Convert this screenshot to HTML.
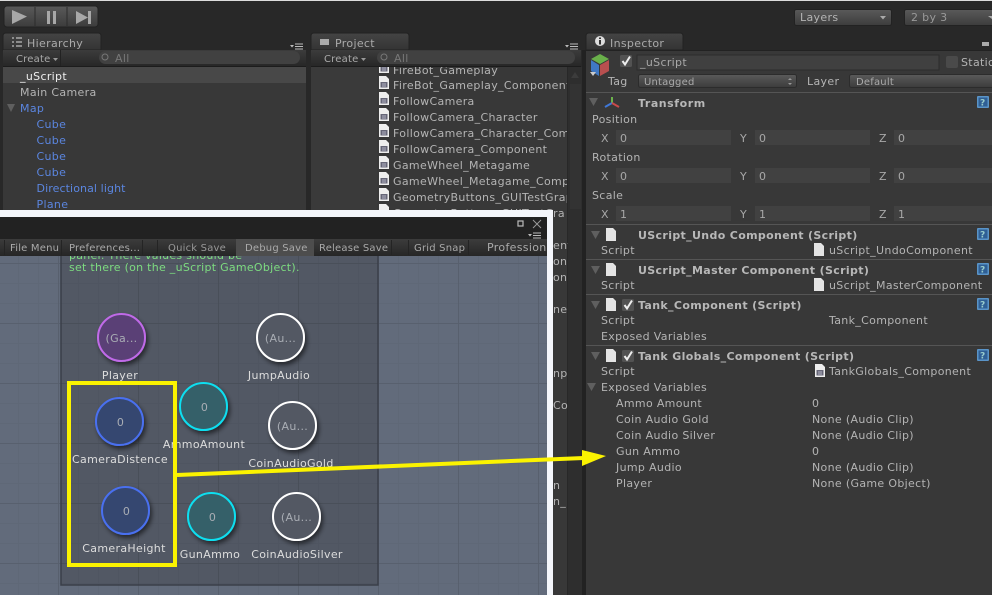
<!DOCTYPE html>
<html><head><meta charset="utf-8"><style>
html,body{margin:0;padding:0;background:#282828;width:992px;height:595px;overflow:hidden}
svg{display:block}
text{font-family:"DejaVu Sans",sans-serif;font-size:11px;letter-spacing:.33px;fill:#b4b4b4;white-space:pre}
.b{fill:#5b86e0}
.w{fill:#eee}
.s{font-size:10px;fill:#aaa;letter-spacing:.2px}
.h{font-weight:bold;fill:#b8b8b8;letter-spacing:.35px}
.d{fill:#a8a8a8}
.t{fill:#ddd;text-anchor:middle}
.n{fill:#a9adb4;text-anchor:middle}
.g{fill:#7ddc80;letter-spacing:.27px}
</style></head><body>
<svg width="992" height="595" viewBox="0 0 992 595" xmlns="http://www.w3.org/2000/svg">
<defs>
<linearGradient id="btn" x1="0" y1="0" x2="0" y2="1"><stop offset="0" stop-color="#5a5a5a"/><stop offset="1" stop-color="#3c3c3c"/></linearGradient>
<linearGradient id="tb" x1="0" y1="0" x2="0" y2="1"><stop offset="0" stop-color="#3c3c3c"/><stop offset="1" stop-color="#262626"/></linearGradient>
<linearGradient id="tab" x1="0" y1="0" x2="0" y2="1"><stop offset="0" stop-color="#444"/><stop offset="1" stop-color="#343434"/></linearGradient>
<pattern id="grid" width="80" height="60" patternUnits="userSpaceOnUse" x="58" y="263">
<path d="M0 .5H80M0 20.5H80M0 40.5H80M.5 0V60M20.5 0V60M40.5 0V60M60.5 0V60" stroke="#000" stroke-opacity=".03" fill="none"/>
<path d="M0 .5H80M.5 0V60" stroke="#000" stroke-opacity=".08" fill="none"/>
</pattern>
<filter id="sh" x="-30%" y="-30%" width="170%" height="170%"><feDropShadow dx="2" dy="3" stdDeviation="2.5" flood-color="#000" flood-opacity=".55"/></filter>
<g id="cs"><path d="M1 0H8L11 3V13H1Z" fill="#eee"/><rect x="2.500" y="6" width="7" height="5.500" fill="#667"/><path d="M4 8H8M4 10H8" stroke="#ccd" stroke-width=".7"/></g>
<g id="doc"><path d="M1 0H8L11 3V13H1Z" fill="#e4e4e4"/></g>
<g id="help"><rect width="12" height="12" rx="1" fill="#5a94c8"/><rect x="1.500" y="1.500" width="9" height="9" fill="#2f5f95"/><text x="3" y="9.500" style="font-size:9px;font-weight:bold;fill:#9cc;letter-spacing:0">?</text></g>
<g id="tri"><path d="M0 0H9L4.500 8Z" fill="#5f5f5f"/></g>
<g id="chk"><rect width="12" height="12" rx="1.500" fill="#525252"/><path d="M2.500 6L5 9.500L10 1.500" stroke="#eee" stroke-width="2" fill="none"/></g>
<g id="menu"><path d="M0 2H4L2 4.500Z" fill="#bbb"/><path d="M5 1H13M5 3.500H13M5 6H13" stroke="#bbb"/></g>
</defs>

<rect width="992" height="595" fill="#282828"/>
<rect width="992" height="1" fill="#ddd"/>
<!-- play controls -->
<rect x="4" y="6" width="94" height="21" rx="3" fill="url(#btn)" stroke="#222"/>
<path d="M35 7V26M67 7V26" stroke="#2c2c2c"/>
<path d="M12 10L27 16.500L12 24Z" fill="#a8a8a8"/>
<path d="M47 11H50V24H47ZM53 11H56V24H53Z" fill="#a8a8a8"/>
<path d="M76 11L88 17.500L76 24ZM88 11H91V24H88Z" fill="#a8a8a8"/>
<!-- layers -->
<rect x="794.500" y="9.500" width="97" height="16" rx="2" fill="url(#btn)" stroke="#222"/>
<text x="800" y="21" fill="#aaa">Layers</text><path d="M880 16H886L883 19.500Z" fill="#aaa"/>
<rect x="904.500" y="9.500" width="90" height="16" rx="2" fill="url(#btn)" stroke="#222"/>
<text x="911" y="21" style="fill:#999">2 by 3</text><path d="M988 16H992V19Z" fill="#aaa"/>

<!-- hierarchy -->
<path d="M3 50V36Q3 33 6 33H98Q101 33 101 36V50Z" fill="url(#tab)" stroke="#222"/>
<path d="M12 38H14M16 38H22M12 42H14M16 42H22M12 46H14M16 46H22" stroke="#ddd"/>
<text x="27" y="47" style="fill:#aaa">Hierarchy</text>
<use href="#menu" x="290" y="43"/>
<rect x="3" y="50" width="303" height="17" fill="url(#tb)"/>
<rect x="3" y="66" width="303" height="1" fill="#1c1c1c"/>
<path d="M60.500 50V66" stroke="#222"/>
<text x="16" y="62" class="s">Create</text><path d="M53 58H58L55.500 61Z" fill="#999"/>
<rect x="99" y="51" width="201" height="13" rx="6.500" fill="#414141"/>
<circle cx="105" cy="57" r="3" fill="none" stroke="#777"/>
<text x="115" y="62" style="fill:#777">All</text>
<rect x="3" y="67" width="303" height="143" fill="#383838"/>
<rect x="3" y="67" width="303" height="16" fill="#484848"/>
<text x="20" y="80" class="w">_uScript</text>
<text x="20" y="96">Main Camera</text>
<path d="M7 104H15L11 112Z" fill="#5f5f5f"/>
<text x="20" y="112" class="b">Map</text>
<text x="36.500" y="128" class="b">Cube</text>
<text x="36.500" y="144" class="b">Cube</text>
<text x="36.500" y="160" class="b">Cube</text>
<text x="36.500" y="176" class="b">Cube</text>
<text x="36.500" y="192" class="b" style="letter-spacing:.1px">Directional light</text>
<text x="36.500" y="208" class="b">Plane</text>

<!-- project -->
<path d="M311 50V36Q311 33 314 33H406Q409 33 409 36V50Z" fill="url(#tab)" stroke="#222"/>
<path d="M320 39H329V45H320Z" fill="#aaa"/>
<text x="335" y="47" style="fill:#aaa">Project</text>
<use href="#menu" x="565" y="43"/>
<rect x="311" y="50" width="270" height="17" fill="url(#tb)"/>
<rect x="311" y="66" width="270" height="1" fill="#1c1c1c"/>
<text x="324" y="62" class="s">Create</text><path d="M361 58H366L363.500 61Z" fill="#999"/>
<rect x="377" y="51" width="198" height="13" rx="6.500" fill="#414141"/>
<circle cx="384" cy="57" r="3" fill="none" stroke="#777"/>
<text x="394" y="62" style="fill:#777">All</text>
<rect x="311" y="67" width="66" height="528" fill="#3a3a3a"/>
<rect x="377" y="67" width="190" height="528" fill="#383838"/>
<rect x="568" y="67" width="14" height="528" fill="#2e2e2e"/>
<path d="M571 78L575 72L579 78Z" fill="#3c3c3c"/>
<rect x="570" y="84" width="11" height="125" fill="#333"/>
<svg x="377" y="67" width="190" height="143" viewBox="377 67 190 143">
<text x="393" y="74">FireBot_Gameplay</text>
<text x="393" y="89">FireBot_Gameplay_Component</text>
<text x="393" y="105">FollowCamera</text>
<text x="393" y="121">FollowCamera_Character</text>
<text x="393" y="137">FollowCamera_Character_Component</text>
<text x="393" y="153">FollowCamera_Component</text>
<text x="393" y="169">GameWheel_Metagame</text>
<text x="393" y="185">GameWheel_Metagame_Component</text>
<text x="393" y="201">GeometryButtons_GUITestGraph</text>
<text x="393" y="217">GeometryButtons_GUITestGraph</text>
<use href="#cs" x="378" y="60"/><use href="#cs" x="378" y="76"/><use href="#cs" x="378" y="92"/><use href="#cs" x="378" y="108"/><use href="#cs" x="378" y="124"/><use href="#cs" x="378" y="140"/><use href="#cs" x="378" y="156"/><use href="#cs" x="378" y="172"/><use href="#cs" x="378" y="188"/><use href="#cs" x="378" y="204"/>
</svg>
<svg x="553" y="205" width="15" height="390" viewBox="553 205 15 390">
<text x="553" y="217">ra</text>
<text x="553" y="249">ent</text>
<text x="553" y="265">on(</text>
<text x="553" y="281">on(</text>
<text x="553" y="313">ne</text>
<text x="553" y="377">npo</text>
<text x="553" y="409">Co</text>
<text x="553" y="489">n</text>
<text x="553" y="505">n_</text>
</svg>

<!-- inspector -->
<rect x="586" y="50" width="406" height="545" fill="#383838"/>
<rect x="582" y="50" width="4" height="545" fill="#222"/>
<path d="M586 50V36Q586 33 589 33H680Q683 33 683 36V50Z" fill="url(#tab)" stroke="#222"/>
<circle cx="600" cy="41" r="5" fill="#ddd"/><rect x="599" y="40" width="2" height="4.500" fill="#333"/><rect x="599" y="37.500" width="2" height="1.500" fill="#333"/>
<text x="610" y="47" style="fill:#aaa">Inspector</text>
<path d="M982 42H989V46H982Z" fill="#aaa"/>
<rect x="586" y="50" width="406" height="1" fill="#222"/>
<path d="M591 59L600 54L609 59L600 64Z" fill="#69b04a"/><path d="M591 60L599 65V76L591 71Z" fill="#3f78c4"/><path d="M600 65L609 60V71L600 76Z" fill="#b84f4f"/>
<path d="M590 72H596L593 76Z" fill="#ccc"/>
<use href="#chk" x="620" y="55"/>
<rect x="637" y="55" width="302" height="15" fill="#404040" stroke="#2c2c2c"/>
<text x="640" y="66" class="d">_uScript</text>
<rect x="946" y="56" width="12" height="12" rx="2" fill="#4a4a4a"/>
<text x="961" y="66">Static</text>
<text x="608" y="85">Tag</text>
<rect x="638.500" y="74.500" width="158" height="13" rx="2" fill="url(#btn)" stroke="#2c2c2c"/>
<text x="644" y="85" class="s">Untagged</text><path d="M788 80L790 78L792 80ZM788 83H792L790 85Z" fill="#999"/>
<text x="807" y="85">Layer</text>
<rect x="849.500" y="74.500" width="150" height="13" rx="2" fill="url(#btn)" stroke="#2c2c2c"/>
<text x="856" y="85" class="s">Default</text>
<rect x="586" y="92" width="406" height="1" fill="#555"/>
<use href="#tri" x="589" y="98"/>
<path d="M612 103V97" stroke="#6cb24c" stroke-width="2"/><path d="M612 103L605 107" stroke="#3f78d8" stroke-width="2"/><path d="M612 103L619 107" stroke="#c94a4a" stroke-width="2"/>
<text x="638" y="107" class="h" style="letter-spacing:.55px">Transform</text>
<use href="#help" x="977" y="96"/>
<text x="592" y="123">Position</text>
<text x="592" y="161">Rotation</text>
<text x="592" y="199">Scale</text>
<g id="rows">
<text x="601" y="142" class="d">X</text><rect x="616" y="130" width="115" height="15" fill="#414141"/><text x="620" y="142" class="d">0</text>
<text x="740" y="142" class="d">Y</text><rect x="755" y="130" width="115" height="15" fill="#414141"/><text x="759" y="142" class="d">0</text>
<text x="879" y="142" class="d">Z</text><rect x="894" y="130" width="98" height="15" fill="#414141"/><text x="898" y="142" class="d">0</text>
<text x="601" y="180" class="d">X</text><rect x="616" y="168" width="115" height="15" fill="#414141"/><text x="620" y="180" class="d">0</text>
<text x="740" y="180" class="d">Y</text><rect x="755" y="168" width="115" height="15" fill="#414141"/><text x="759" y="180" class="d">0</text>
<text x="879" y="180" class="d">Z</text><rect x="894" y="168" width="98" height="15" fill="#414141"/><text x="898" y="180" class="d">0</text>
<text x="601" y="218" class="d">X</text><rect x="616" y="206" width="115" height="15" fill="#414141"/><text x="620" y="218" class="d">1</text>
<text x="740" y="218" class="d">Y</text><rect x="755" y="206" width="115" height="15" fill="#414141"/><text x="759" y="218" class="d">1</text>
<text x="879" y="218" class="d">Z</text><rect x="894" y="206" width="98" height="15" fill="#414141"/><text x="898" y="218" class="d">1</text>
</g>
<rect x="586" y="224" width="406" height="1" fill="#555"/>
<use href="#tri" x="591" y="231"/><use href="#doc" x="605" y="228"/>
<text x="638" y="239" class="h">UScript_Undo Component (Script)</text><use href="#help" x="977" y="228"/>
<text x="601" y="254">Script</text><use href="#doc" x="813" y="243"/><text x="829" y="254">uScript_UndoComponent</text>
<rect x="586" y="259" width="406" height="1" fill="#555"/>
<use href="#tri" x="591" y="266"/><use href="#doc" x="605" y="263"/>
<text x="638" y="274" class="h">UScript_Master Component (Script)</text><use href="#help" x="977" y="263"/>
<text x="601" y="289">Script</text><use href="#doc" x="813" y="278"/><text x="829" y="289">uScript_MasterComponent</text>
<rect x="586" y="294" width="406" height="1" fill="#555"/>
<use href="#tri" x="591" y="301"/><use href="#doc" x="605" y="298"/><use href="#chk" x="622" y="299"/>
<text x="638" y="309" class="h">Tank_Component (Script)</text><use href="#help" x="977" y="298"/>
<text x="601" y="324">Script</text><text x="829" y="324">Tank_Component</text>
<text x="601" y="340">Exposed Variables</text>
<rect x="586" y="345" width="406" height="1" fill="#555"/>
<use href="#tri" x="591" y="352"/><use href="#doc" x="605" y="349"/><use href="#chk" x="622" y="350"/>
<text x="638" y="360" class="h">Tank Globals_Component (Script)</text><use href="#help" x="977" y="349"/>
<text x="601" y="375">Script</text><use href="#cs" x="814" y="364"/><text x="829" y="375">TankGlobals_Component</text>
<use href="#tri" x="587" y="383"/>
<text x="601" y="391">Exposed Variables</text>
<text x="616" y="407">Ammo Amount</text><text x="812" y="407">0</text>
<text x="616" y="423">Coin Audio Gold</text><text x="812" y="423">None (Audio Clip)</text>
<text x="616" y="439">Coin Audio Silver</text><text x="812" y="439">None (Audio Clip)</text>
<text x="616" y="455">Gun Ammo</text><text x="812" y="455">0</text>
<text x="616" y="471">Jump Audio</text><text x="812" y="471">None (Audio Clip)</text>
<text x="616" y="487">Player</text><text x="812" y="487">None (Game Object)</text>

<!-- floating uScript window -->
<rect x="0" y="210" width="553" height="385" fill="#f4f6fb"/>
<rect x="0" y="217" width="547" height="22" fill="#222"/>
<rect x="518" y="221" width="5" height="5" fill="none" stroke="#bbb" stroke-width="1.200"/>
<path d="M533 220L541 228M541 220L533 228" stroke="#999"/>
<use href="#menu" x="528" y="232"/>
<rect x="0" y="239" width="547" height="17" fill="url(#tb)"/>
<path d="M4.500 240V255M61.500 240V255M142.500 240V255M157.500 240V255M236.500 240V255M391.500 240V255M408.500 240V255M468.500 240V255" stroke="#242424"/>
<rect x="236" y="239" width="78" height="17" fill="#4d4d4d"/>
<text x="10" y="251" class="s">File Menu</text>
<text x="69" y="251" class="s">Preferences...</text>
<text x="168" y="251" class="s" style="fill:#999">Quick Save</text>
<text x="245" y="251" class="s">Debug Save</text>
<text x="319" y="251" class="s">Release Save</text>
<text x="414" y="251" class="s">Grid Snap</text>
<text x="487" y="251" style="fill:#aaa">Profession</text>
<!-- canvas -->
<rect x="0" y="256" width="547" height="339" fill="#626b7b"/>
<rect x="0" y="256" width="547" height="339" fill="url(#grid)"/>
<rect x="61" y="256" width="317" height="329" fill="#525864"/>
<rect x="61" y="256" width="317" height="329" fill="url(#grid)"/>
<path d="M61 256V585H378V256" fill="none" stroke="#3a3f49" stroke-width="1.500"/>
<svg x="61" y="256" width="317" height="20" viewBox="61 256 317 20">
<text x="69" y="259" class="g">panel. There values should be</text>
<text x="69" y="271" class="g">set there (on the _uScript GameObject).</text>
</svg>

<g filter="url(#sh)">
<circle cx="121.500" cy="337.500" r="23.500" fill="#5a3f76" stroke="#c06be8" stroke-width="2"/>
<circle cx="280.500" cy="337.500" r="23.500" fill="#525864" stroke="#fff" stroke-width="2"/>
<circle cx="119.500" cy="421.500" r="23.500" fill="#36476f" stroke="#4a70f0" stroke-width="2"/>
<circle cx="203.500" cy="406.500" r="23.500" fill="#356069" stroke="#10dff0" stroke-width="2"/>
<circle cx="292.500" cy="425.500" r="23.500" fill="#525864" stroke="#fff" stroke-width="2"/>
<circle cx="125.500" cy="510.500" r="23.500" fill="#36476f" stroke="#4a70f0" stroke-width="2"/>
<circle cx="211.500" cy="516.500" r="23.500" fill="#356069" stroke="#10dff0" stroke-width="2"/>
<circle cx="296.500" cy="516.500" r="23.500" fill="#525864" stroke="#fff" stroke-width="2"/>
</g>
<text x="121.500" y="342" class="n">(Ga...</text>
<text x="280.500" y="342" class="n">(Au...</text>
<text x="120.500" y="426" class="n">0</text>
<text x="204.500" y="411" class="n">0</text>
<text x="292.500" y="430" class="n">(Au...</text>
<text x="126.500" y="515" class="n">0</text>
<text x="212.500" y="521" class="n">0</text>
<text x="296.500" y="521" class="n">(Au...</text>
<text x="120" y="379" class="t">Player</text>
<text x="279" y="379" class="t">JumpAudio</text>
<text x="120" y="463" class="t">CameraDistence</text>
<text x="204" y="448" class="t">AmmoAmount</text>
<text x="291" y="467" class="t">CoinAudioGold</text>
<text x="124" y="552" class="t">CameraHeight</text>
<text x="210" y="558" class="t">GunAmmo</text>
<text x="297" y="558" class="t">CoinAudioSilver</text>

<!-- white strip on the right -->
<rect x="547" y="210" width="6" height="385" fill="#f4f6fb"/>

<!-- annotations -->
<rect x="69" y="383" width="106" height="182" fill="none" stroke="#fbf300" stroke-width="4"/>
<path d="M177 475L584 458" stroke="#fbf300" stroke-width="4"/>
<path d="M582 450L606 456L582 466Z" fill="#fbf300"/>
</svg>
</body></html>
